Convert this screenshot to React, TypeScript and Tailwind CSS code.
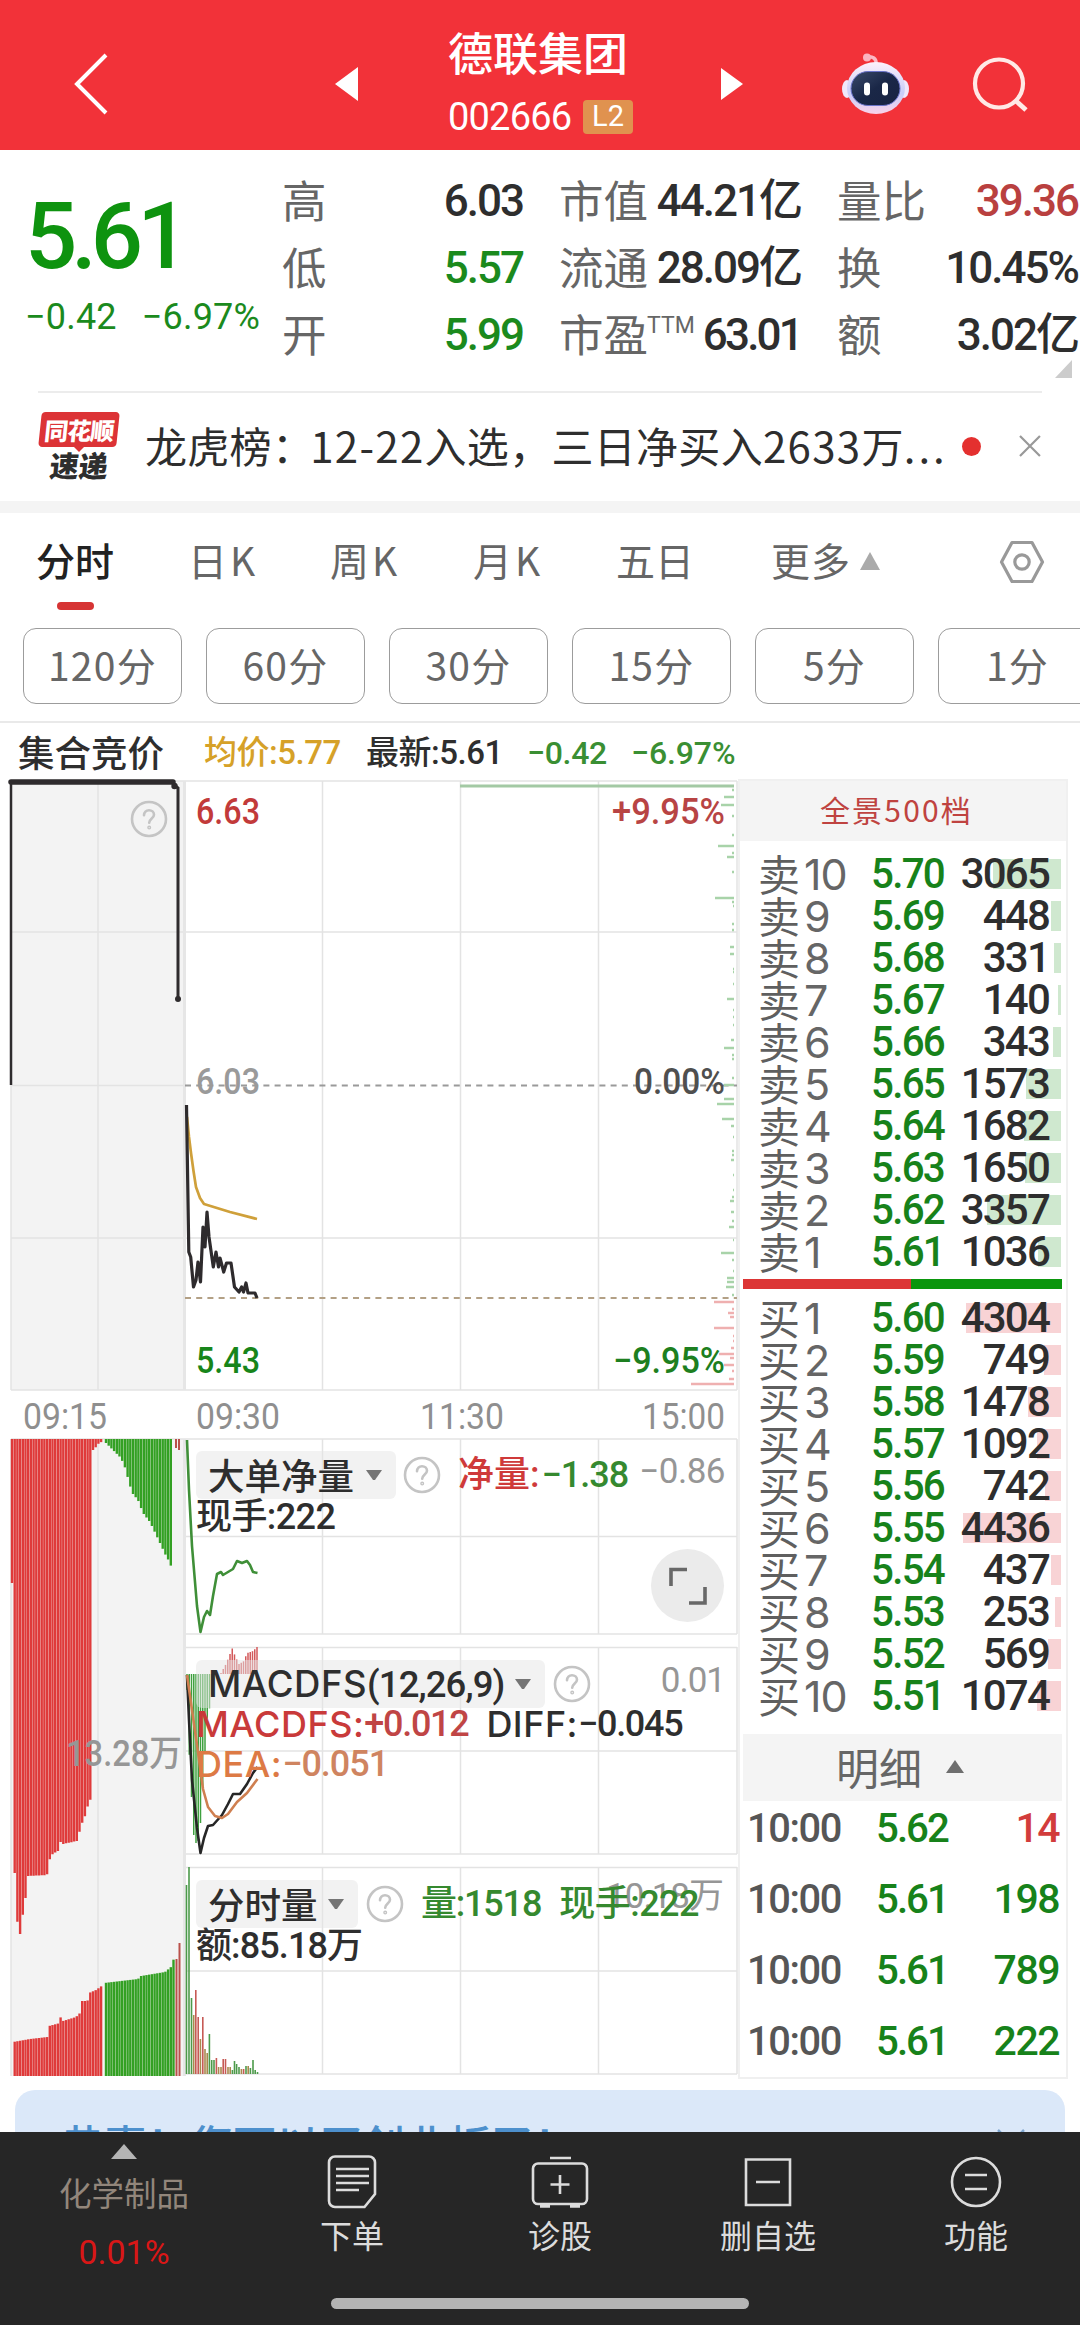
import React from 'react'

const cjk = "font-['Noto_Sans_CJK_SC',sans-serif]"
const num = "font-['Roboto','Noto_Sans_CJK_SC',sans-serif] font-medium"

const PERIODS = ['120分', '60分', '30分', '15分', '5分', '1分']

const SELLS: [number, string, number][] = [
  [10, '5.70', 3065],
  [9, '5.69', 448],
  [8, '5.68', 331],
  [7, '5.67', 140],
  [6, '5.66', 343],
  [5, '5.65', 1573],
  [4, '5.64', 1682],
  [3, '5.63', 1650],
  [2, '5.62', 3357],
  [1, '5.61', 1036],
]

const BUYS: [number, string, number][] = [
  [1, '5.60', 4304],
  [2, '5.59', 749],
  [3, '5.58', 1478],
  [4, '5.57', 1092],
  [5, '5.56', 742],
  [6, '5.55', 4436],
  [7, '5.54', 437],
  [8, '5.53', 253],
  [9, '5.52', 569],
  [10, '5.51', 1074],
]

const TICKS = [
  ['10:00', '5.62', '14', 'text-[#d23c3c]'],
  ['10:00', '5.61', '198', 'text-[#17821a]'],
  ['10:00', '5.61', '789', 'text-[#17821a]'],
  ['10:00', '5.61', '222', 'text-[#17821a]'],
]

type Pt = [number, number]

// linear interpolation over a list of [x, y] points
const at = (pts: Pt[], x: number) => {
  for (let i = 1; i < pts.length; i++) {
    const [x0, y0] = pts[i - 1]
    const [x1, y1] = pts[i]
    if (x <= x1) return x1 === x0 ? y1 : y0 + ((y1 - y0) * (x - x0)) / (x1 - x0)
  }
  return pts[pts.length - 1][1]
}

const range = (from: number, to: number, step: number) => {
  const out: number[] = []
  for (let x = from; x <= to; x += step) out.push(x)
  return out
}

const line = (pts: Pt[]) => pts.map((p) => p.join(',')).join(' ')

// auction pane, unmatched volume (hangs from the top)
const HANG_RED: Pt[] = [
  [11, 1583], [12.5, 1583], [13, 1873], [17, 1873], [17.5, 1934], [22, 1934], [23, 1910], [25, 1910],
  [26, 1886], [27, 1886], [28, 1876], [47, 1875], [49, 1862], [51, 1855], [58, 1851], [60, 1846],
  [61.5, 1836], [63, 1844], [77, 1841], [80, 1830], [83, 1820], [86, 1814], [89, 1800], [92.5, 1799],
  [93, 1450], [96, 1447], [98, 1444], [103, 1441],
]
const HANG_GREEN: Pt[] = [
  [104, 1441], [121, 1458], [126, 1470], [129, 1483], [133, 1494], [138, 1500], [143, 1513], [150, 1522],
  [160, 1543], [167, 1558], [170, 1562], [172, 1571],
]
// auction pane, matched volume (stands on the bottom)
const STAND_RED: Pt[] = [
  [13, 2042], [30, 2039], [47.5, 2037], [49, 2026], [60, 2023], [61.5, 2009], [63, 2021], [76, 2017],
  [80, 2013], [81.5, 2001], [87.5, 2001], [89, 1993], [96, 1990], [103, 1985],
]
const STAND_GREEN: Pt[] = [[104, 1983], [138, 1979], [141, 1976], [165, 1972], [171, 1967], [173, 1960], [176, 1958]]

const PRICE: Pt[] = [
  [186.5, 1105], [188.8, 1252], [190.7, 1257], [193.5, 1287], [196, 1280], [198, 1262], [200.5, 1282],
  [203, 1227], [205, 1247], [207, 1212], [209, 1237], [213.3, 1267], [216, 1252], [218.5, 1267], [220, 1258],
  [223.7, 1272], [226.5, 1263], [231, 1263], [234.5, 1287], [239, 1292], [241.6, 1287], [243.5, 1292],
  [246, 1283], [248, 1293], [255, 1293], [257, 1298],
]
const AVERAGE: Pt[] = [[187, 1117], [189, 1137], [191, 1153], [193.5, 1171], [196, 1187], [200, 1198], [204, 1204], [230, 1212], [257, 1219]]
const NET: Pt[] = [
  [187, 1440], [189, 1490], [192, 1546], [197, 1606], [200.5, 1632], [204, 1617], [207, 1611], [210, 1615],
  [213, 1596], [217, 1574], [221, 1572], [223, 1575], [233, 1569], [237, 1561], [242, 1563], [247, 1561],
  [250, 1565], [253, 1572], [257.5, 1573],
]
const DIFF: Pt[] = [
  [187, 1675], [189, 1720], [192, 1780], [197, 1828], [200.5, 1853], [204, 1838], [208, 1826], [213, 1825],
  [222, 1815], [228, 1804], [233, 1794], [240, 1794], [247, 1784], [253, 1773], [257.5, 1767],
]
const DEA: Pt[] = [
  [187, 1675], [192, 1710], [197, 1745], [203, 1789], [208, 1807], [215, 1816], [222, 1818], [228, 1814],
  [237, 1802], [247, 1793], [257.5, 1779],
]
const MACD_DOWN: Pt[] = [
  [187, 1690], [189, 1750], [191.5, 1797], [193.5, 1834], [196, 1843], [198, 1843], [200.5, 1823], [203, 1782],
  [205, 1752], [207, 1720], [210, 1706], [214, 1680],
]
const MACD_UP: Pt[] = [
  [221, 1673], [226, 1664], [230, 1654], [232.5, 1648], [235, 1656], [239, 1664], [244, 1661], [247, 1653],
  [253, 1651], [257, 1647],
]

const G = '#4c9a4a'
const R = '#c65a55'
const B = '#a88a4e'
const VOLUME: [number, number, string][] = [
  [186.5, 1885, G], [189, 1867, G], [191.5, 1998, G], [193.7, 2015, B], [195.8, 1990, R], [198.2, 2017, R],
  [200.4, 2039, B], [202.8, 2017, R], [205, 2049, B], [207.2, 2053, B], [209.4, 2034, G], [211.7, 2060, G],
  [214, 2060, G], [216.4, 2058, R], [218.6, 2067, B], [221, 2067, B], [223.2, 2059, R], [225.5, 2059, R],
  [228, 2067, B], [230.2, 2067, B], [232.4, 2070, G], [234.5, 2061, G], [236.6, 2064, G], [239, 2067, G],
  [241.4, 2069, B], [243.6, 2069, R], [246, 2066, G], [248.2, 2066, B], [250.4, 2068, G], [253, 2060, G],
  [255.2, 2070, G], [257.5, 2072, G],
]

// price distribution along the right edge: [y, length]
const DIST_GREEN: Pt[] = [
  [790, 2], [797, 10], [805, 13], [816, 2], [835, 2], [846, 16], [853, 2], [857, 7], [872, 2], [898, 19], [902, 2],
  [906, 1], [924, 2], [930, 2], [947, 4], [954, 4], [969, 1], [972, 1], [984, 1], [999, 7], [1010, 1], [1017, 1],
  [1025, 1], [1040, 3], [1048, 10], [1055, 2], [1059, 2], [1085, 10], [1078, 2], [1099, 10], [1104, 17], [1119, 12], [1126, 3],
  [1137, 1], [1151, 2], [1155, 2], [1160, 3], [1175, 1], [1190, 1], [1197, 2], [1201, 4], [1212, 3], [1221, 2],
  [1227, 5], [1240, 1], [1253, 13], [1260, 2], [1271, 1], [1278, 7], [1282, 7], [1287, 8], [1295, 2],
]
const DIST_RED: Pt[] = [
  [1302, 20], [1309, 2], [1313, 6], [1317, 4], [1328, 20], [1336, 1], [1341, 1], [1348, 3], [1354, 15], [1358, 4],
  [1365, 10], [1371, 2], [1379, 5], [1384, 43],
]

type LabelProps = { x: number; y: number; w: number; fill: string; end?: boolean; light?: boolean; children: string }

const Label = ({ x, y, w, fill, end, light, children }: LabelProps) => (
  <text
    x={x}
    y={y}
    fill={fill}
    textLength={w}
    lengthAdjust="spacingAndGlyphs"
    textAnchor={end ? 'end' : 'start'}
    className={`font-['Roboto','Noto_Sans_CJK_SC',sans-serif] text-[36px] ${light ? 'font-normal' : 'font-medium'}`}
  >
    {children}
  </text>
)

const Help = () => (
  <svg width="38" height="38" viewBox="0 0 38 38" fill="none" stroke="#c4c4c4" strokeWidth="2.6" strokeLinecap="round">
    <circle cx="19" cy="19" r="17" />
    <path d="M14 15.2c0-3 2.2-5 5-5s5 1.900 5 4.600c0 3.500-4.800 4-4.800 8" />
    <circle cx="19.200" cy="27.600" r="0.700" />
  </svg>
)

const Caret = ({ className = '' }: { className?: string }) => (
  <svg className={className} width="18" height="12" viewBox="0 0 18 12">
    <path d="M1 1h16L10 11H8z" fill="#757575" />
  </svg>
)

const Header = () => (
  <header className="flex h-[150px] items-center bg-[#f23239] pt-[17px]">
    <svg className="ml-[72px]" width="40" height="64" viewBox="0 0 40 64" fill="none" stroke="#fff" strokeWidth="4">
      <path d="M34 3L5 32l29 29" />
    </svg>
    <svg className="ml-[223px]" width="24" height="36" viewBox="0 0 24 36">
      <path d="M23 1v34L0 18z" fill="#fff" />
    </svg>
    <div className="ml-[89px] flex w-[186px] flex-col">
      <div className={`${cjk} text-[45px] leading-[54px] font-medium text-white`}>德联集团</div>
      <div className="mt-[13px] flex h-[50px] items-center">
        <span className={`${num} w-[135px] text-[38px] font-normal tracking-[-0.8px] text-white`}>002666</span>
        <span className={`${num} flex h-[34px] w-[50px] items-center justify-center rounded-[4px] bg-[#e0924f] text-[29px] font-normal text-white`}>L2</span>
      </div>
    </div>
    <svg className="ml-[87px]" width="24" height="36" viewBox="0 0 24 36">
      <path d="M0 2v32l22-16z" fill="#fff" />
    </svg>
    <svg className="ml-[97px]" width="68" height="64" viewBox="0 0 68 64">
      <defs>
        <linearGradient id="shell" x1="0" y1="0" x2="0" y2="1">
          <stop offset="0" stopColor="#fdf1fb" />
          <stop offset="0.6" stopColor="#c9cdf8" />
          <stop offset="1" stopColor="#f9d3ea" />
        </linearGradient>
        <linearGradient id="visor" x1="0" y1="0" x2="1" y2="1">
          <stop offset="0" stopColor="#3a4a6a" />
          <stop offset="0.5" stopColor="#1a2747" />
          <stop offset="1" stopColor="#182342" />
        </linearGradient>
      </defs>
      <path d="M25 5c5-1 10 1 9 8" fill="none" stroke="#fbb9c4" strokeWidth="3.500" />
      <circle cx="25" cy="5.500" r="4" fill="#fbb3bf" />
      <ellipse cx="5" cy="37" rx="5" ry="9" fill="#f1e8fb" />
      <ellipse cx="62" cy="37" rx="5" ry="9" fill="#f1e8fb" />
      <ellipse cx="34" cy="36" rx="29" ry="26" fill="url(#shell)" />
      <rect x="9" y="19.500" width="49" height="34" rx="17" fill="url(#visor)" stroke="#6a74c9" strokeWidth="1" />
      <rect x="22" y="30.500" width="6" height="13" rx="3" fill="#fff" />
      <rect x="40" y="30.500" width="6" height="13" rx="3" fill="#fff" />
    </svg>
    <svg className="ml-[60px]" width="60" height="60" viewBox="0 0 60 60" fill="none" stroke="#ffe9e6" strokeWidth="4.200">
      <circle cx="29" cy="29.500" r="24" />
      <path d="M45 46l11 10" strokeWidth="4.800" />
    </svg>
  </header>
)

const Stat = ({ label, sup, value, color }: { label: string; sup?: string; value: string; color: string }) => (
  <div className="flex h-[67px] items-center justify-between">
    <span className={`${cjk} -mt-[4px] flex text-[44.500px] leading-[60px] whitespace-nowrap text-[#666]`}>
      {label}
      {sup && <span className="-ml-px font-['Roboto'] text-[23px] leading-[46px]">{sup}</span>}
    </span>
    <span className={`${num} mt-px text-[44px] leading-[60px] ${sup ? 'tracking-[-2.800px]' : 'tracking-[-2px]'} whitespace-nowrap ${color}`}>{value}</span>
  </div>
)

const Quote = () => (
  <section className="relative flex h-[241px] pt-[17px]">
    <div className="w-[282px] shrink-0 pl-[25px]">
      <div className={`${num} mt-[20px] text-[92px] leading-[100px] tracking-[-6px] text-[#0e930f]`}>5.61</div>
      <div className={`${num} mt-[10px] flex gap-[25px] text-[36px] leading-[40px] font-normal tracking-[0.200px] whitespace-nowrap text-[#1b8a1d]`}>
        <span>−0.42</span>
        <span>−6.97%</span>
      </div>
    </div>
    <div className="w-[241px] shrink-0">
      <Stat label="高" value="6.03" color="text-[#2e2e2e]" />
      <Stat label="低" value="5.57" color="text-[#1b8a1d]" />
      <Stat label="开" value="5.99" color="text-[#1b8a1d]" />
    </div>
    <div className="ml-[36px] w-[242px] shrink-0">
      <Stat label="市值" value="44.21亿" color="text-[#2e2e2e]" />
      <Stat label="流通" value="28.09亿" color="text-[#2e2e2e]" />
      <Stat label="市盈" sup="TTM" value="63.01" color="text-[#2e2e2e]" />
    </div>
    <div className="ml-[36px] w-[241px] shrink-0">
      <Stat label="量比" value="39.36" color="text-[#b9403f]" />
      <Stat label="换" value="10.45%" color="text-[#2e2e2e]" />
      <Stat label="额" value="3.02亿" color="text-[#2e2e2e]" />
    </div>
    <svg className="absolute right-[8px] bottom-[13px]" width="17" height="18" viewBox="0 0 17 18">
      <path d="M17 0v18H0z" fill="#ccc" />
    </svg>
  </section>
)

const News = () => (
  <section className="mx-[38px] flex h-[110px] items-center border-t-2 border-[#ececec] pb-[2px]">
    <div className="relative flex h-[68px] w-[82px] shrink-0 flex-col items-center">
      <div className={`${cjk} flex h-[35px] w-[78px] -skew-x-6 items-center justify-center rounded-[4px] bg-[#dc3336] text-[24px] leading-[30px] font-black tracking-[-1px] text-white`}>
        同花顺
      </div>
      <svg className="-mt-px" width="12" height="6" viewBox="0 0 12 6">
        <path d="M0 0h12L6 6z" fill="#dc3336" />
      </svg>
      <div className={`${cjk} -mt-[3px] -skew-x-6 text-[29px] leading-[30px] font-black text-[#2e2e2e]`}>速递</div>
    </div>
    <div className={`${cjk} -mt-[3px] ml-[25px] w-[808px] text-[42px] leading-[60px] tracking-[0.300px] whitespace-nowrap text-[#2e2e2e]`}>
      龙虎榜：<span className="-ml-[4px] tracking-[1.300px]">12-22</span>入选，三日净买入
      <span className="tracking-[1.300px]">2633</span>万<span className="tracking-[3px]">...</span>
    </div>
    <span className="ml-[11px] size-[19px] rounded-full bg-[#e4302f]" />
    <svg className="ml-[37px]" width="24" height="24" viewBox="0 0 24 24" stroke="#999" strokeWidth="2.200">
      <path d="M2 2l20 20M22 2L2 22" />
    </svg>
  </section>
)

const Tabs = () => (
  <nav className={`${cjk} flex h-[97px] text-[39px] leading-[60px] whitespace-nowrap text-[#666]`}>
    <div className="mt-[16px] ml-[36px] flex w-[78px] flex-col items-center font-medium text-[#222]">
      分时
      <span className="mt-[13px] h-[9px] w-[37px] rounded-full bg-[#d63434]" />
    </div>
    <span className="mt-[16px] ml-[74px] w-[72px] tracking-[3px]">日K</span>
    <span className="mt-[16px] ml-[70px] w-[76px] tracking-[3px]">周K</span>
    <span className="mt-[16px] ml-[67px] w-[76px] tracking-[3px]">月K</span>
    <span className="mt-[16px] ml-[67px] w-[78px]">五日</span>
    <span className="mt-[16px] ml-[77px] w-[80px] tracking-[1px]">更多</span>
    <svg className="mt-[39px] ml-[9px]" width="20" height="18" viewBox="0 0 20 18">
      <path d="M10 0l10 18H0z" fill="#aaa" />
    </svg>
    <svg className="mt-[27px] ml-[119px]" width="46" height="44" viewBox="0 0 46 44" fill="none" stroke="#999" strokeWidth="3.200" strokeLinejoin="round">
      <path d="M13 2.500h20l10.500 19.500L33 41.500H13L2.500 22z" />
      <circle cx="23" cy="22" r="7.200" />
    </svg>
  </nav>
)

const Periods = () => (
  <div className="flex h-[113px] gap-6 overflow-hidden border-b-2 border-[#e9e9e9] pt-[18px] pl-[23px]">
    {PERIODS.map((p) => (
      <div
        key={p}
        className={`${cjk} flex h-[76px] w-[159px] shrink-0 items-center justify-center rounded-[13px] border-[1.500px] border-[#9c9c9c] pb-[3px] text-[39px] leading-none tracking-[1.300px] text-[#666]`}
      >
        {p}
      </div>
    ))}
  </div>
)

const Legend = () => (
  <div className={`${num} flex h-[55px] items-center pt-[4px] pl-[18px] whitespace-nowrap`}>
    <span className={`${cjk} w-[186px] text-[36.500px] leading-none text-[#2e2e2e]`}>集合竞价</span>
    <span className="w-[162px] text-[33px] leading-none tracking-[-0.500px] text-[#d6a128]">均价:5.77</span>
    <span className="w-[161px] text-[33px] leading-none tracking-[-0.500px] text-[#2e2e2e]">最新:5.61</span>
    <span className="w-[104px] text-[32px] leading-none tracking-[-0.300px] text-[#3a8f33]">−0.42</span>
    <span className="text-[32px] leading-none tracking-[-0.100px] text-[#3a8f33]">−6.97%</span>
  </div>
)

const ChartDrawing = () => (
  <svg className="block" width="738" height="1304" viewBox="0 778 738 1304">
    <rect x="11" y="781" width="173" height="609" fill="#f3f3f3" />
    <rect x="11" y="1439" width="173" height="637" fill="#f3f3f3" />
    <g stroke="#e3e3e3" strokeWidth="1.500">
      {[781, 932, 1238, 1390].map((y) => (
        <path key={y} d={`M11 ${y}H737`} />
      ))}
      <path d="M11 1085.500H184M98 781V1390M98 1439V2076M11 1439V2076M11 1085V1390M11 1439H737" />
      {[1536.5, 1634, 1647.5, 1751, 1854, 1867.5, 1971, 2074].map((y) => (
        <path key={y} d={`M184 ${y}H737`} />
      ))}
      {[322.5, 460.5, 598.5, 737].map((x) => (
        <path key={x} d={`M${x} 781V1390M${x} 1439V1634M${x} 1647V1854M${x} 1867V2074`} />
      ))}
      <path d="M184.500 781V1390M184.500 1439V2076" stroke="#e6e6e6" strokeWidth="3" />
    </g>

    <path d="M185 1085.500H737" stroke="#9a9a9a" strokeWidth="2" strokeDasharray="6 5.200" />
    <path d="M185 1298H737" stroke="#b3a085" strokeWidth="2" strokeDasharray="6 5.200" />

    {/* volume by price */}
    <path d="M460 786H734" stroke="#a3c9a4" strokeWidth="3" />
    {DIST_GREEN.map(([y, w]) => (
      <path key={y} d={`M${734 - w} ${y}H734`} stroke="#a8d3a9" strokeWidth="2.500" />
    ))}
    {DIST_RED.map(([y, w]) => (
      <path key={y} d={`M${734 - w} ${y}H734`} stroke="#efb0b0" strokeWidth="2.500" />
    ))}

    {/* auction price */}
    <g fill="none" stroke="#2e2b2d">
      <path d="M11 782V1085" strokeWidth="2.500" />
      <path d="M11 782H173" strokeWidth="5.500" strokeLinecap="round" />
      <path d="M173 784L178 788V999" strokeWidth="3" />
    </g>
    <circle cx="174.500" cy="786" r="3.200" fill="#2e2b2d" />
    <circle cx="178" cy="999" r="3" fill="#2e2b2d" />

    <polyline points={line(AVERAGE)} fill="none" stroke="#cfa03a" strokeWidth="2.700" strokeLinejoin="round" />
    <polyline points={line(PRICE)} fill="none" stroke="#2e2b2d" strokeWidth="3.200" strokeLinejoin="round" />

    <Label x={196} y={824} w={64} fill="#c23a3a">6.63</Label>
    <Label x={725} y={824} w={113} fill="#b84444" end>+9.95%</Label>
    <Label x={196} y={1094} w={64} fill="#9a9a9a">6.03</Label>
    <Label x={725} y={1094} w={91} fill="#4f4f4f" end>0.00%</Label>
    <Label x={196} y={1373} w={64} fill="#17851a">5.43</Label>
    <Label x={725} y={1373} w={112} fill="#1d7f20" end>−9.95%</Label>
    <Label x={23} y={1429} w={84} fill="#8f8f8f" light>09:15</Label>
    <Label x={196} y={1429} w={84} fill="#8f8f8f" light>09:30</Label>
    <Label x={420} y={1429} w={84} fill="#8f8f8f" light>11:30</Label>
    <Label x={725} y={1429} w={83} fill="#8f8f8f" light end>15:00</Label>

    {/* auction volumes */}
    {range(12, 103, 2.7).map((x) => (
      <g key={x} stroke="#df3a3a" strokeWidth="2.400">
        <path d={`M${x} 1439V${at(HANG_RED, x)}`} />
        {x > 13 && <path d={`M${x} 2076V${at(STAND_RED, x)}`} />}
      </g>
    ))}
    {range(106, 175, 2.7).map((x) => (
      <g key={x} stroke="#33a023" strokeWidth="2.400">
        {x < 173 && <path d={`M${x} 1439V${at(HANG_GREEN, x)}`} />}
        <path d={`M${x} 2076V${at(STAND_GREEN, x)}`} />
      </g>
    ))}
    <path d="M176 1439V1448M179 1439V1450M176.500 2076V1959M179.500 2076V1943" stroke="#b9504a" strokeWidth="2" />
    <Label x={182} y={1766} w={116} fill="#969696" end>13.28万</Label>

    <polyline points={line(NET)} fill="none" stroke="#3f8f38" strokeWidth="2.600" strokeLinejoin="round" />

    {/* macd */}
    {range(187, 214, 2.25).map((x) => (
      <path key={x} d={`M${x} 1674V${at(MACD_DOWN, x)}`} stroke="#3fa03f" strokeWidth="1.500" />
    ))}
    {range(221, 258, 2.25).map((x) => (
      <path key={x} d={`M${x} 1674V${at(MACD_UP, x)}`} stroke="#d3595a" strokeWidth="1.500" />
    ))}
    <polyline points={line(DIFF)} fill="none" stroke="#262626" strokeWidth="2.600" strokeLinejoin="round" />
    <polyline points={line(DEA)} fill="none" stroke="#cf7f50" strokeWidth="2.600" strokeLinejoin="round" />

    {VOLUME.map(([x, y, c]) => (
      <path key={x} d={`M${x} 2074V${y}`} stroke={c} strokeWidth="1.600" />
    ))}
  </svg>
)

const Picker = ({ width, children }: { width: string; children: React.ReactNode }) => (
  <span className={`flex h-[48px] items-center justify-between rounded-[6px] bg-[#e6e6e6]/50 pr-[13px] pl-[12px] text-[#2e2e2e] ${width}`}>
    <span className={`${cjk} text-[36.500px] leading-none font-medium`}>{children}</span>
    <Caret />
  </span>
)

const Charts = () => (
  <div className="relative w-[738px] shrink-0">
    <Legend />
    <ChartDrawing />
    <div className="absolute top-[77px] left-[130px]">
      <Help />
    </div>

    <div className={`${num} absolute top-[728px] left-[196px] w-[529px] whitespace-nowrap`}>
      <div className="flex h-[48px] items-center">
        <Picker width="w-[200px]">大单净量</Picker>
        <span className="ml-[7px]"><Help /></span>
        <span className="ml-[17px] text-[36px] leading-none text-[#cf3a3a]">净量:</span>
        <span className="ml-[2px] text-[36px] leading-none tracking-[-1px] text-[#35892f]">−1.38</span>
        <span className="mb-2 ml-auto text-[35px] leading-none font-normal tracking-[-0.500px] text-[#969696]">−0.86</span>
      </div>
      <div className="text-[36px] leading-[36px] tracking-[-0.600px] text-[#2e2e2e]">现手:222</div>
    </div>

    <div className="absolute top-[826px] left-[651px] flex size-[73px] items-center justify-center rounded-full bg-[#ebebeb]">
      <svg width="40" height="40" viewBox="0 0 40 40" fill="none" stroke="#686868" strokeWidth="3.600">
        <path d="M19 3.500H3V20M37 21V37H21" />
      </svg>
    </div>

    <div className={`${num} absolute top-[937px] left-[196px] w-[529px] whitespace-nowrap`}>
      <div className="flex h-[48px] items-center">
        <Picker width="w-[349px]">
          <span className="font-['Inter'] tracking-[0.500px]">MACDFS</span>
          <span className="font-['Roboto'] tracking-[-0.900px]">(12,26,9)</span>
        </Picker>
        <span className="ml-[8px]"><Help /></span>
        <span className="mb-2 ml-auto text-[35px] leading-none font-normal tracking-[-1px] text-[#969696]">0.01</span>
      </div>
      <div className="-mt-[4px] flex h-[40px] items-center text-[36px] leading-none tracking-[-1.300px]">
        <span className="font-['Inter'] tracking-[0.500px] text-[#c93a3a]">MACDFS:</span>
        <span className="text-[#c04545]">+0.012</span>
        <span className="ml-[18px] font-['Inter'] tracking-[0.500px] text-[#2e2e2e]">DIFF:</span>
        <span className="text-[#2e2e2e]">−0.045</span>
      </div>
      <div className="flex h-[40px] items-center text-[36px] leading-none tracking-[-1px] text-[#dd7a45]">
        <span className="font-['Inter'] tracking-[0.500px]">DEA:</span>
        <span className="text-[#cf8460]">−0.051</span>
      </div>
    </div>

    <div className={`${num} absolute top-[1157px] left-[196px] w-[529px] whitespace-nowrap`}>
      <div className="relative flex h-[48px] items-center">
        <Picker width="w-[162px]">分时量</Picker>
        <span className="ml-[8px]"><Help /></span>
        <span className="absolute top-0 right-[2px] text-[35px] leading-[34px] font-normal tracking-[-1px] text-[#969696]">10.18万</span>
        <span className="z-10 ml-[17px] text-[36px] leading-none tracking-[-1.200px] text-[#35892f]">量:1518</span>
        <span className="z-10 ml-[18px] text-[36px] leading-none tracking-[-0.500px] text-[#35892f]">现手:222</span>
      </div>
      <div className="text-[36px] leading-[36px] tracking-[-0.900px] text-[#2e2e2e]">额:85.18万</div>
    </div>
  </div>
)

const Depth = ({ side, rows, bar }: { side: string; rows: [number, string, number][]; bar: string }) => (
  <div>
    {rows.map(([level, price, qty]) => (
      <div key={level} className="relative flex h-[42px] items-center pl-[18px]">
        <div className={`absolute top-[6px] right-[5px] h-[30px] ${bar}`} style={{ width: qty * 0.0221 }} />
        <span className={`${cjk} -mt-[3px] w-[46px] text-[42px] leading-none text-[#5f5f5f]`}>{side}</span>
        <span className="w-[67px] font-['Inter'] text-[43px] leading-none tracking-[-1px] text-[#666]">{level}</span>
        <span className={`${num} origin-left scale-x-96 text-[42px] leading-none tracking-[-1.800px] text-[#17821a]`}>{price}</span>
        <span className={`${num} relative mr-[17px] ml-auto text-[42px] leading-none tracking-[-1.800px] text-[#2e2e2e]`}>{qty}</span>
      </div>
    ))}
  </div>
)

const OrderBook = () => (
  <aside className="mt-[56px] flex h-[1300px] w-[330px] flex-col border-2 border-[#f0f0f0]">
    <div className={`${cjk} flex h-[60px] shrink-0 items-center justify-center bg-[#f4f4f4] pr-[13px] pb-[5px] text-[30px] leading-none tracking-[2.200px] text-[#bf4340]`}>
      全景500档
    </div>
    <div className="pt-[12px]">
      <Depth side="卖" rows={SELLS} bar="bg-[#cfe8cf]" />
    </div>
    <div className="mt-[6px] ml-[3px] flex h-[10px] w-[319px] shrink-0">
      <div className="w-[168px] bg-[#dc3535]" />
      <div className="flex-1 bg-[#0b960d]" />
    </div>
    <div className="pt-[8px]">
      <Depth side="买" rows={BUYS} bar="bg-[#f8d3d5]" />
    </div>
    <div className={`${cjk} mt-[17px] ml-[3px] flex h-[67px] w-[319px] shrink-0 items-center bg-[#f4f4f4] pb-[2px] pl-[93px] text-[43px] leading-none text-[#666]`}>
      明细
      <svg className="ml-[24px]" width="18" height="13" viewBox="0 0 18 13">
        <path d="M9 0l9 13H0z" fill="#6e6e6e" />
      </svg>
    </div>
    <div className={`${num} -mt-[8px] text-[41px] leading-none`}>
      {TICKS.map(([time, price, qty, color]) => (
        <div key={qty} className="flex h-[71px] items-center pr-[7px] pl-[7px]">
          <span className="w-[129px] origin-left scale-x-97 tracking-[-1.400px] text-[#565656]">{time}</span>
          <span className="origin-left scale-x-98 tracking-[-2px] text-[#17821a]">{price}</span>
          <span className={`ml-auto tracking-[-1.500px] ${color}`}>{qty}</span>
        </div>
      ))}
    </div>
  </aside>
)

const Action = ({ label, children }: { label: string; children: React.ReactNode }) => (
  <div className="flex w-[208px] flex-col items-center pt-[20px]">
    <svg width="60" height="60" viewBox="0 0 60 60" fill="none" stroke="#dcdcdc" strokeWidth="2.600">
      {children}
    </svg>
    <span className={`${cjk} mt-[2px] text-[32px] leading-[40px] text-[#dcdcdc]`}>{label}</span>
  </div>
)

const BottomBar = () => (
  <footer className="relative flex h-[193px] shrink-0 bg-[#262626]">
    <div className="flex w-[248px] flex-col items-center pt-[12px]">
      <svg width="26" height="15" viewBox="0 0 26 15">
        <path d="M13 0l13 15H0z" fill="#b5b5b5" />
      </svg>
      <span className={`${cjk} mt-[13px] text-[32.500px] leading-[40px] text-[#92867b]`}>化学制品</span>
      <span className={`${num} mt-[20px] text-[34px] leading-[40px] font-normal text-[#d91717]`}>0.01%</span>
    </div>
    <Action label="下单">
      <path d="M13 4.500h34a6 6 0 0 1 6 6V42L42.500 55H13a6 6 0 0 1-6-6V10.500a6 6 0 0 1 6-6z" />
      <path d="M14 17h33M14 24h33M14 31h33M14 38h23" />
    </Action>
    <Action label="诊股">
      <path d="M20 6h21M8 11.500h44a5 5 0 0 1 5 5V47a5 5 0 0 1-5 5H8a5 5 0 0 1-5-5V16.500a5 5 0 0 1 5-5zM30 23v19M20.500 32.500h19M10 54.500h10M40 54.500h10" />
    </Action>
    <Action label="删自选">
      <path d="M8 7.500h44V53H8zM18 30h24" />
    </Action>
    <Action label="功能">
      <circle cx="30" cy="30" r="24" />
      <path d="M19 23h22M19 37h22" />
    </Action>
    <div className="absolute bottom-[16px] left-[331px] h-[11px] w-[418px] rounded-full bg-[#b4b4b4]" />
  </footer>
)

const App: React.FC = () => {
  return (
    <div className="flex h-[2325px] w-[1080px] flex-col overflow-hidden bg-white">
      <Header />
      <Quote />
      <News />
      <div className="h-[12px] shrink-0 bg-[#f4f4f4]" />
      <Tabs />
      <Periods />
      <div className="flex h-[1360px] shrink-0">
        <Charts />
        <OrderBook />
      </div>
      <div className={`${cjk} mx-[15px] mt-[7px] flex h-[42px] shrink-0 justify-between overflow-hidden rounded-t-[20px] bg-[#dbe8f9] pr-[39px] pl-[46px] text-[43px] leading-[60px] font-medium whitespace-nowrap text-[#4d90cd]`}>
        <span className="pt-[23px]">恭喜！您可以买创业板了！</span>
        <svg className="mt-[38px]" width="30" height="30" viewBox="0 0 30 30" stroke="#7fa6cf" strokeWidth="2.500">
          <path d="M2 2l26 26M28 2L2 28" />
        </svg>
      </div>
      <BottomBar />
    </div>
  )
}

export default App
